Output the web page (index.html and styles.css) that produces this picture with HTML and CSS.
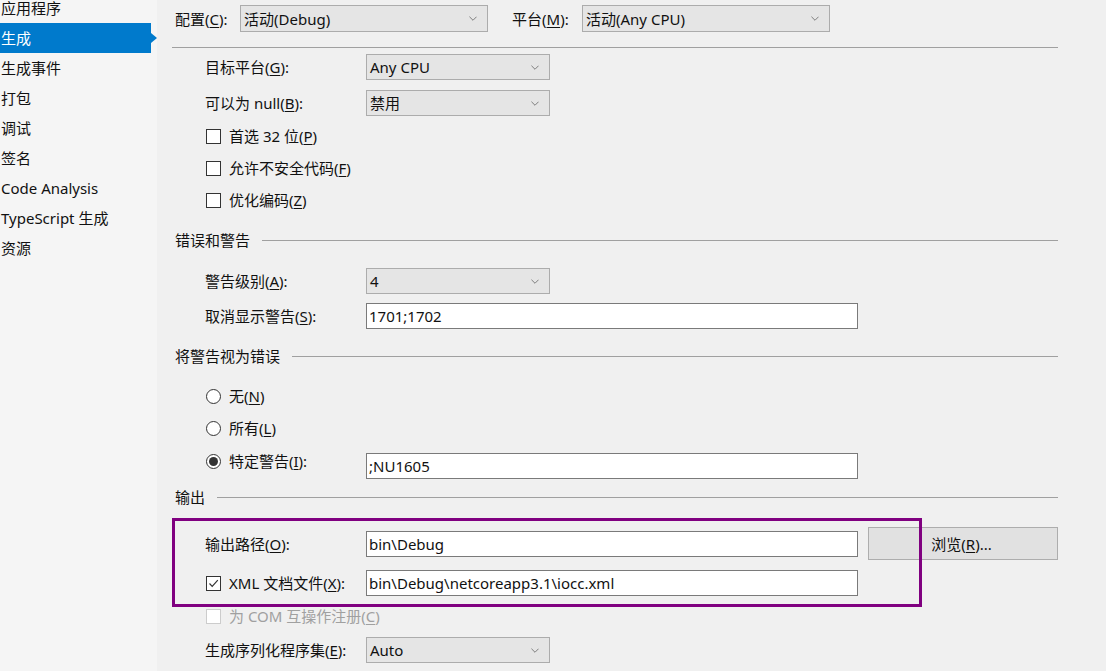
FILE: index.html
```html
<!DOCTYPE html>
<html lang="zh-CN">
<head>
<meta charset="utf-8">
<title>生成</title>
<link rel="stylesheet" href="styles.css">
</head>
<body>
<div class="app">
  <nav class="side">
    <div class="nav-item">应用程序</div>
    <div class="nav-item active">生成</div>
    <div class="nav-item">生成事件</div>
    <div class="nav-item">打包</div>
    <div class="nav-item">调试</div>
    <div class="nav-item">签名</div>
    <div class="nav-item">Code Analysis</div>
    <div class="nav-item">TypeScript 生成</div>
    <div class="nav-item">资源</div>
  </nav>
  <main class="main">
    <div class="config">
      <span class="cfg-label">配置(<u>C</u>):</span>
      <div class="select cfg-select"><span>活动(Debug)</span><svg class="chev" viewBox="0 0 9 5"><polyline points="0.5,0.5 4.5,4.5 8.5,0.5"/></svg></div>
      <span class="cfg-label plat">平台(<u>M</u>):</span>
      <div class="select cfg-select"><span>活动(Any CPU)</span><svg class="chev" viewBox="0 0 9 5"><polyline points="0.5,0.5 4.5,4.5 8.5,0.5"/></svg></div>
    </div>
    <div class="rule"></div>

    <div class="row r-target">
      <span class="lbl">目标平台(<u>G</u>):</span>
      <div class="select"><span>Any CPU</span><svg class="chev" viewBox="0 0 9 5"><polyline points="0.5,0.5 4.5,4.5 8.5,0.5"/></svg></div>
    </div>
    <div class="row r-null">
      <span class="lbl">可以为 null(<u>B</u>):</span>
      <div class="select"><span>禁用</span><svg class="chev" viewBox="0 0 9 5"><polyline points="0.5,0.5 4.5,4.5 8.5,0.5"/></svg></div>
    </div>
    <div class="check-row c1"><span class="cb"></span><span>首选 32 位(<u>P</u>)</span></div>
    <div class="check-row"><span class="cb"></span><span>允许不安全代码(<u>F</u>)</span></div>
    <div class="check-row"><span class="cb"></span><span>优化编码(<u>Z</u>)</span></div>

    <div class="heading h-err"><span>错误和警告</span></div>
    <div class="row r-level">
      <span class="lbl">警告级别(<u>A</u>):</span>
      <div class="select"><span>4</span><svg class="chev" viewBox="0 0 9 5"><polyline points="0.5,0.5 4.5,4.5 8.5,0.5"/></svg></div>
    </div>
    <div class="row r-suppress">
      <span class="lbl">取消显示警告(<u>S</u>):</span>
      <div class="textbox">1701;1702</div>
    </div>

    <div class="heading h-treat"><span>将警告视为错误</span></div>
    <div class="check-row r-none"><span class="rb"></span><span>无(<u>N</u>)</span></div>
    <div class="check-row"><span class="rb"></span><span>所有(<u>L</u>)</span></div>
    <div class="row r-specific">
      <span class="lbl radio-lbl"><span class="rb on"></span><span>特定警告(<u>I</u>):</span></span>
      <div class="textbox">;NU1605</div>
    </div>

    <div class="heading h-out"><span>输出</span></div>
    <div class="out-group">
      <div class="row r-path">
        <span class="lbl">输出路径(<u>O</u>):</span>
        <div class="textbox">bin\Debug</div>
        <div class="button">浏览(<u>R</u>)...</div>
      </div>
      <div class="row r-xml">
        <span class="lbl radio-lbl"><span class="cb checked"><svg viewBox="0 0 13 13"><polyline points="2.5,6.5 5.2,9.3 10.8,3.2"/></svg></span><span>XML 文档文件(<u>X</u>):</span></span>
        <div class="textbox">bin\Debug\netcoreapp3.1\iocc.xml</div>
      </div>
      <div class="highlight"></div>
    </div>
    <div class="check-row disabled r-com"><span class="cb"></span><span>为 COM 互操作注册(<u>C</u>)</span></div>
    <div class="row r-serial">
      <span class="lbl">生成序列化程序集(<u>E</u>):</span>
      <div class="select"><span>Auto</span><svg class="chev" viewBox="0 0 9 5"><polyline points="0.5,0.5 4.5,4.5 8.5,0.5"/></svg></div>
    </div>
  </main>
</div>
</body>
</html>
```

FILE: styles.css
```css
html, body {
  margin: 0;
  padding: 0;
  height: 100%;
  overflow: hidden;
}
body {
  font-family: "Noto Sans", "Noto Sans CJK SC", sans-serif;
  font-size: 15px;
  color: #111;
  background: #f0f0f0;
}
u { text-decoration-thickness: 1px; text-underline-offset: 2px; }

.app {
  display: flex;
  height: 671px;
}

/* sidebar */
.side {
  width: 157px;
  flex: none;
  background: #f5f5f5;
  margin-top: -7px;
}
.nav-item {
  height: 30px;
  line-height: 30px;
  padding-left: 1px;
  width: 150px;
  white-space: nowrap;
  position: relative;
}
.nav-item.active {
  background: #007acc;
  color: #fff;
}
.nav-item.active::after {
  content: "";
  position: absolute;
  right: -6px;
  top: 10px;
  border-left: 6px solid #007acc;
  border-top: 5px solid transparent;
  border-bottom: 5px solid transparent;
}

/* main */
.main {
  flex: 1;
  padding: 5px 48px 0 15px;
  line-height: 20px;
}
.config {
  display: flex;
  align-items: center;
  height: 27px;
}
.cfg-label {
  margin-left: 3px;
  width: 65px;
  flex: none;
}
.cfg-label.plat {
  margin-left: 24px;
  width: 70px;
}
.select {
  box-sizing: border-box;
  width: 184px;
  height: 26px;
  background: #e5e5e5;
  border: 1px solid #acacac;
  display: flex;
  align-items: center;
  justify-content: space-between;
  padding: 0 10px 0 3px;
  flex: none;
}
.cfg-select {
  width: 248px;
  height: 27px;
}
.chev {
  width: 8px;
  height: 5px;
  fill: none;
  stroke: #707070;
  stroke-width: 1;
}
.rule {
  height: 1px;
  background: #a0a0a0;
  margin-top: 15px;
}

.row {
  display: flex;
  align-items: center;
  padding-left: 33px;
}
.lbl {
  width: 161px;
  flex: none;
  white-space: nowrap;
}
.r-target { margin-top: 6px; height: 26px; }
.r-null { margin-top: 10px; height: 26px; }

.check-row {
  display: flex;
  align-items: center;
  height: 24px;
  margin-top: 8px;
  padding-left: 34px;
}
.cb, .rb {
  box-sizing: border-box;
  width: 15px;
  height: 15px;
  border: 1px solid #333;
  background: #fff;
  flex: none;
  margin-right: 8px;
  display: inline-flex;
  align-items: center;
  justify-content: center;
}
.rb { border-radius: 50%; }
.rb.on::after {
  content: "";
  width: 9px;
  height: 9px;
  border-radius: 50%;
  background: #333;
}
.cb svg {
  width: 13px;
  height: 13px;
  fill: none;
  stroke: #333;
  stroke-width: 1.2;
}
.disabled { color: #a0a0a0; }
.disabled .cb { border-color: #cccccc; }

.heading {
  display: flex;
  align-items: center;
  height: 20px;
  padding-left: 3px;
  gap: 12px;
}
.heading::after {
  content: "";
  flex: 1;
  height: 1px;
  background: #a0a0a0;
}
.h-err { margin-top: 18px; }
.h-treat { margin-top: 17px; }
.h-out { margin-top: 8px; }

.r-level { margin-top: 18px; height: 26px; }
.r-suppress { margin-top: 9px; height: 26px; }
.textbox {
  box-sizing: border-box;
  width: 492px;
  height: 26px;
  background: #fff;
  border: 1px solid #7a7a7a;
  padding: 0 2px;
  line-height: 24px;
  flex: none;
  white-space: nowrap;
}
.r-none { margin-top: 18px; }
.r-specific {
  margin-top: 13px;
  height: 26px;
  align-items: flex-start;
  padding-left: 34px;
}
.radio-lbl {
  display: flex;
  align-items: center;
  width: 160px;
  height: 17px;
  line-height: 17px;
}

.out-group {
  position: relative;
  margin-top: 20px;
}
.r-path { height: 33px; }
.button {
  box-sizing: border-box;
  width: 190px;
  height: 33px;
  margin-left: 10px;
  background: #e1e1e1;
  border: 1px solid #adadad;
  display: flex;
  align-items: center;
  justify-content: center;
  padding-right: 3px;
  flex: none;
}
.r-xml {
  margin-top: 10px;
  height: 26px;
  padding-left: 34px;
}
.r-xml .radio-lbl { height: 26px; }
.highlight {
  position: absolute;
  left: 0;
  top: -9px;
  width: 750px;
  height: 89px;
  box-sizing: border-box;
  border: 3px solid #800080;
  pointer-events: none;
}
.r-com { margin-top: 8px; }
.r-serial { margin-top: 9px; height: 26px; }
```
